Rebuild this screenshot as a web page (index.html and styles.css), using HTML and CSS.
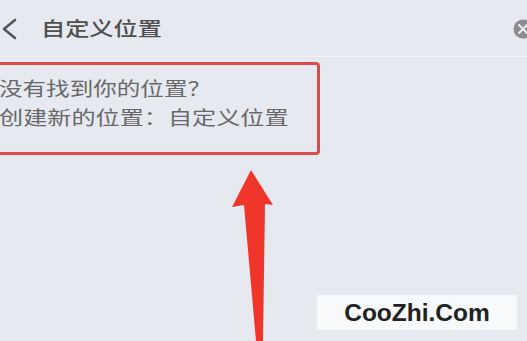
FILE: index.html
```html
<!DOCTYPE html>
<html lang="zh">
<head>
<meta charset="utf-8">
<link rel="stylesheet" href="styles.css">
</head>
<body>
<div class="page">
  <header class="header">
    <svg class="back" width="20" height="22" viewBox="0 0 20 22"><path d="M15 2 L4 11 L15 20" fill="none" stroke="#555" stroke-width="2.6" stroke-linecap="round" stroke-linejoin="round"/></svg>
    <h1 class="title"><span class="stretch">自定义位置</span></h1>
    <svg class="close" width="14" height="20" viewBox="0 0 14 20"><circle cx="10" cy="10" r="9.5" fill="#8c8c8c"/><path d="M6 6 L14 14 M14 6 L6 14" stroke="#e6e9f0" stroke-width="2.2" stroke-linecap="round"/></svg>
  </header>
  <div class="notice">
    <p class="line"><span class="stretch">没有找到你的位置？</span></p>
    <p class="line"><span class="stretch wide">创建新的位置：自定义位置</span></p>
  </div>
  <svg class="arrow" width="60" height="180" viewBox="0 0 60 180"><path d="M19 0 L0 37 L12 35 L24 171 L31 171 L33 34 L41 35 Z" fill="#f0362b"/></svg>
  <div class="watermark">CooZhi.Com</div>
</div>
</body>
</html>
```
FILE: styles.css
```css
html, body {
  margin: 0;
  padding: 0;
}
body {
  width: 527px;
  height: 341px;
  overflow: hidden;
  background: #e6e9f0;
  font-family: "Noto Sans CJK SC", "Noto Sans", sans-serif;
}
.page {
  position: relative;
  width: 527px;
  height: 341px;
  overflow: hidden;
}
.header {
  height: 57px;
  display: flex;
  align-items: center;
  padding-left: 0;
  border-bottom: 1px solid #edf0f5;
  box-sizing: border-box;
}
.back {
  flex: none;
  margin-top: 2px;
}
.title {
  margin: 0 0 0 21px;
  font-size: 19.5px;
  font-weight: 500;
  color: #4e4e4e;
  line-height: 24px;
  flex: 1;
}
.stretch {
  display: inline-block;
  transform: scaleX(1.24);
  transform-origin: left center;
  white-space: nowrap;
}
.stretch.wide {
  transform: scaleX(1.27);
}
.close {
  flex: none;
  margin-top: 2px;
}
.notice {
  margin: 5px 0 0 -10px;
  width: 330px;
  box-sizing: border-box;
  border: 3px solid #dc4a4a;
  border-radius: 4px;
  padding: 8px 0 21px 6px;
  color: #686868;
  font-size: 19px;
}
.line {
  margin: 0;
  line-height: 29px;
}
.arrow {
  position: absolute;
  left: 232px;
  top: 170px;
}
.watermark {
  position: absolute;
  left: 317px;
  top: 295px;
  width: 200px;
  height: 35px;
  background: #f8f9fb;
  color: #222;
  font-family: "Liberation Sans", Arial, sans-serif;
  font-weight: bold;
  font-size: 24.5px;
  line-height: 35px;
  text-align: center;
}
```
